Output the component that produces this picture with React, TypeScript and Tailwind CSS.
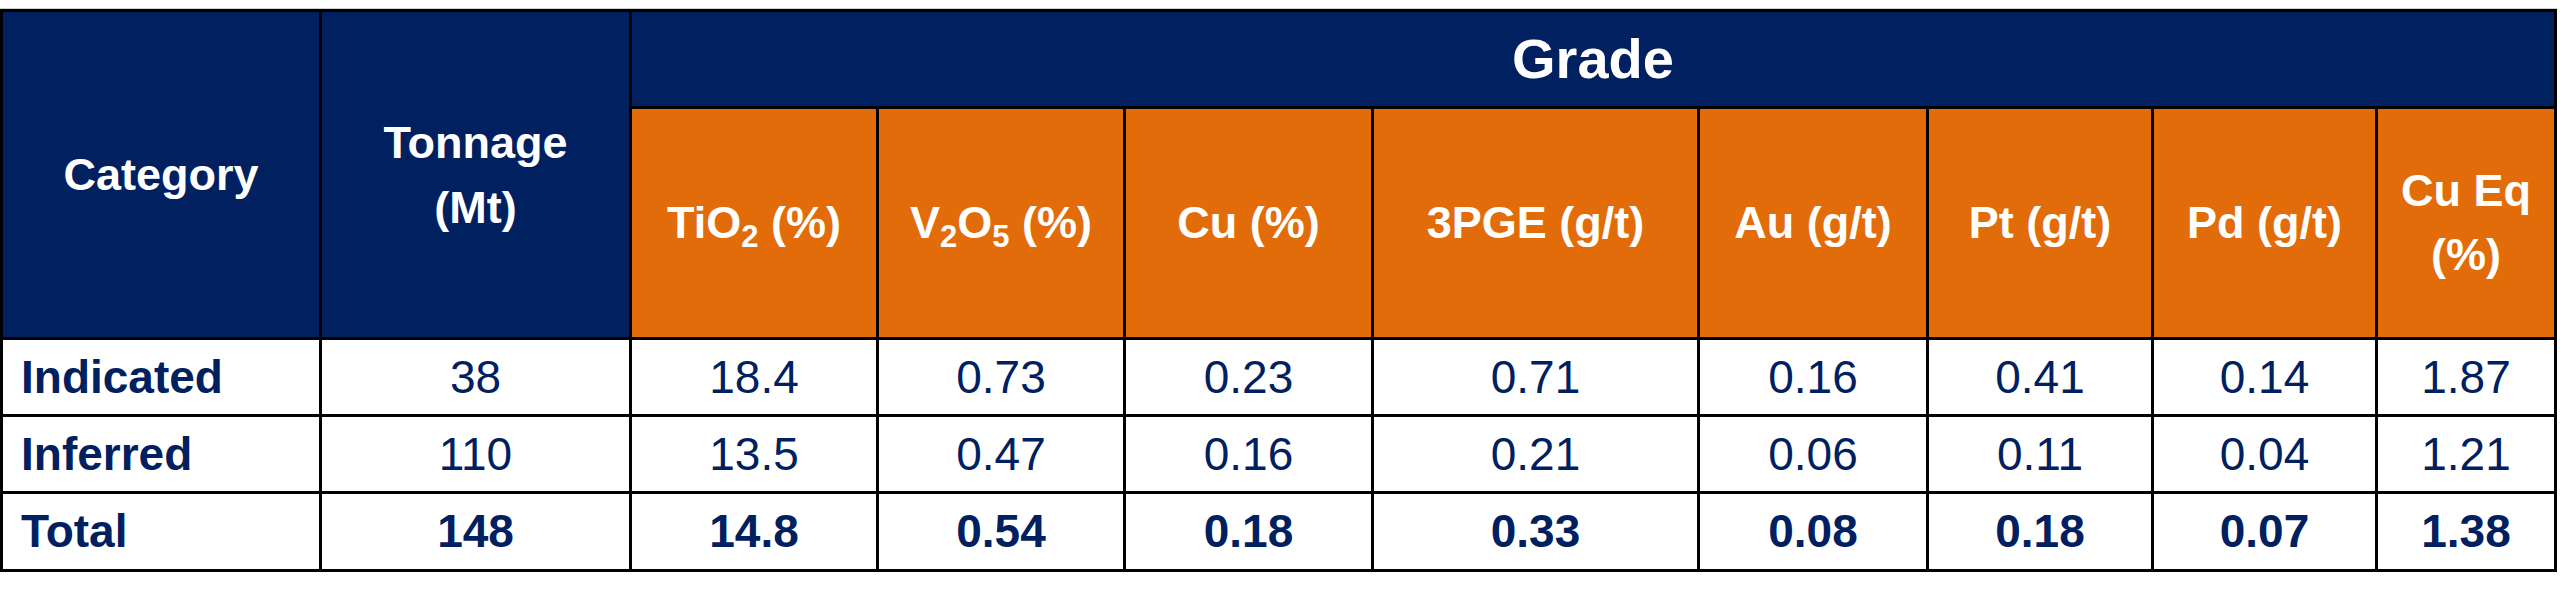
import React from "react";

const NAVY = "bg-[#002060]";

const Sub = ({ children }: { children: React.ReactNode }) => (
  <sub className="text-[31px] relative top-[9px] align-baseline">{children}</sub>
);

const subHeaders: React.ReactNode[] = [
  <>TiO<Sub>2</Sub> (%)</>,
  <>V<Sub>2</Sub>O<Sub>5</Sub> (%)</>,
  <>Cu (%)</>,
  <>3PGE (g/t)</>,
  <>Au (g/t)</>,
  <>Pt (g/t)</>,
  <>Pd (g/t)</>,
  <span className="leading-[64px] block">Cu Eq<br />(%)</span>,
];

const rows: { label: string; bold: boolean; values: string[] }[] = [
  { label: "Indicated", bold: false, values: ["38", "18.4", "0.73", "0.23", "0.71", "0.16", "0.41", "0.14", "1.87"] },
  { label: "Inferred", bold: false, values: ["110", "13.5", "0.47", "0.16", "0.21", "0.06", "0.11", "0.04", "1.21"] },
  { label: "Total", bold: true, values: ["148", "14.8", "0.54", "0.18", "0.33", "0.08", "0.18", "0.07", "1.38"] },
];

export default function App() {
  return (
    <div className="w-[2560px] h-[597px] bg-white font-['Liberation_Sans',Arial,sans-serif]">
      <div className="pt-[8px]">
        <div className="w-[2557px] border-t border-[#d0d0d0]">
          <div className="grid w-[2557px] bg-black p-[3px] gap-[3px] grid-cols-[316px_307px_244px_244px_245px_323px_226px_222px_221px_176px] grid-rows-[94px_228px_74px_74px_75px]">
            <div className={`${NAVY} row-span-2 flex items-center justify-center text-white font-bold text-[45px]`}>
              Category
            </div>
            <div className={`${NAVY} row-span-2 flex items-center justify-center text-white font-bold text-[45px] text-center leading-[65px]`}>
              <span>
                Tonnage
                <br />
                (Mt)
              </span>
            </div>
            <div className={`${NAVY} col-span-8 flex items-center justify-center text-white font-bold text-[56px]`}>
              Grade
            </div>
            {subHeaders.map((h, i) => (
              <div
                key={i}
                className="bg-[#e36c0a] flex items-center justify-center text-white font-bold text-[45px] text-center"
              >
                <span>{h}</span>
              </div>
            ))}
            {rows.map((r) => (
              <React.Fragment key={r.label}>
                <div className="bg-white flex items-center pl-[18px] text-[#002060] font-bold text-[46px]">
                  {r.label}
                </div>
                {r.values.map((v, j) => (
                  <div
                    key={j}
                    className={`bg-white flex items-center justify-center text-[#002060] text-[46px] ${r.bold ? "font-bold" : "font-normal"}`}
                  >
                    {v}
                  </div>
                ))}
              </React.Fragment>
            ))}
          </div>
        </div>
      </div>
    </div>
  );
}
